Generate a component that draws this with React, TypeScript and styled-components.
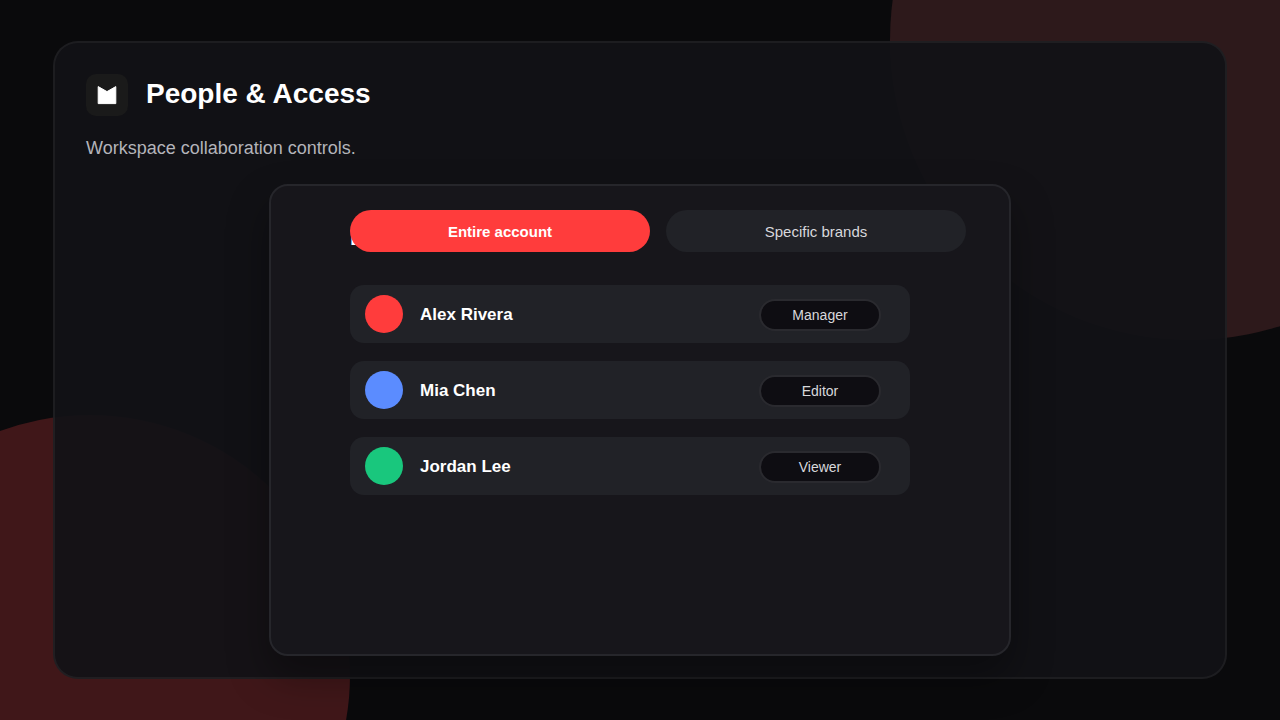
import React from "react";
import styled, { createGlobalStyle } from "styled-components";

const GlobalStyle = createGlobalStyle`
  *, *::before, *::after { box-sizing: border-box; }
  body {
    margin: 0;
    background: #0a0a0c;
    font-family: "Liberation Sans", Arial, Helvetica, sans-serif;
    color: #ffffff;
  }
  h1, h2, p, ul { margin: 0; padding: 0; }
  button { font-family: inherit; cursor: pointer; }
`;

const Page = styled.div`
  position: relative;
  display: flex;
  min-height: 100vh;
  padding: 41px 53px;
  overflow: hidden;
  background: #0a0a0c;
`;

const TopGlow = styled.div`
  position: absolute;
  top: -260px;
  right: -210px;
  width: 600px;
  height: 600px;
  border-radius: 50%;
  background: #2d191b;
`;

const BottomGlow = styled.div`
  position: absolute;
  bottom: -215px;
  left: -170px;
  width: 520px;
  height: 520px;
  border-radius: 50%;
  background: #401719;
`;

const Card = styled.main`
  position: relative;
  flex: 1;
  display: flex;
  flex-direction: column;
  padding: 31px 31px 21px;
  border: 2px solid rgba(255, 255, 255, 0.05);
  border-radius: 25px;
  background: rgba(18, 18, 22, 0.94);
`;

const Header = styled.header`
  display: flex;
  align-items: center;
  gap: 18px;
  height: 42px;
`;

const Logo = styled.div`
  display: grid;
  place-items: center;
  width: 42px;
  height: 42px;
  border-radius: 10px;
  background: #1a1a1a;
`;

const Title = styled.h1`
  padding-bottom: 2px;
  font-size: 28px;
  line-height: 32px;
  font-weight: 700;
`;

const Subtitle = styled.p`
  margin-top: 22px;
  font-size: 18px;
  line-height: 20px;
  color: #b4b4ba;
`;

const Panel = styled.section`
  flex: 1;
  width: 100%;
  max-width: 742px;
  margin: 26px auto 0;
  padding: 24px 43px 24px 79px;
  border: 2px solid #26262b;
  border-radius: 19px;
  background: #17161b;
  box-shadow: 0 20px 40px rgba(0, 0, 0, 0.35);
`;

const PanelHead = styled.div`
  display: grid;
  align-items: center;

  > * { grid-area: 1 / 1; }
`;

const PanelTitle = styled.h2`
  align-self: end;
  font-size: 22px;
  line-height: 28px;
  font-weight: 700;
`;

const Scopes = styled.div`
  position: relative;
  display: grid;
  grid-template-columns: 1fr 1fr;
  gap: 16px;
`;

const ScopeButton = styled.button<{ $active?: boolean }>`
  height: 42px;
  padding: 0;
  border: 0;
  border-radius: 21px;
  font-size: 15px;
  font-weight: ${(p) => (p.$active ? 700 : 400)};
  color: ${(p) => (p.$active ? "#ffffff" : "#d8d8dc")};
  background: ${(p) => (p.$active ? "#ff3c3c" : "#212227")};
`;

const People = styled.ul`
  display: flex;
  flex-direction: column;
  gap: 18px;
  max-width: 560px;
  margin-top: 33px;
  list-style: none;
`;

const PersonRow = styled.li`
  display: flex;
  align-items: center;
  height: 58px;
  padding: 0 29px 0 15px;
  border-radius: 14px;
  background: #212227;
`;

const Avatar = styled.span<{ $color: string }>`
  width: 38px;
  height: 38px;
  border-radius: 50%;
  background: ${(p) => p.$color};
`;

const Name = styled.span`
  flex: 1;
  margin-left: 17px;
  padding-top: 2px;
  font-size: 17px;
  line-height: 20px;
  font-weight: 700;
`;

const RoleButton = styled.button`
  width: 122px;
  height: 32px;
  margin-top: 2px;
  padding: 0;
  border: 2px solid #2a2a2f;
  border-radius: 16px;
  font-size: 14px;
  color: #d8d8dc;
  background: #0e0d12;
`;

const people = [
  { name: "Alex Rivera", role: "Manager", color: "#ff3c3c" },
  { name: "Mia Chen", role: "Editor", color: "#5b8cff" },
  { name: "Jordan Lee", role: "Viewer", color: "#19c77d" },
];

export default function App() {
  return (
    <>
      <GlobalStyle />
      <Page>
        <TopGlow />
        <BottomGlow />
        <Card>
          <Header>
            <Logo>
              <svg width="20" height="20" viewBox="0 0 20 20" aria-hidden="true">
                <path
                  d="M1.2 1.6 10 6.6 18.8 1.6V18.6H1.2Z"
                  fill="#fff"
                  stroke="#fff"
                  strokeWidth="1"
                  strokeLinejoin="round"
                />
              </svg>
            </Logo>
            <Title>People &amp; Access</Title>
          </Header>
          <Subtitle>Workspace collaboration controls.</Subtitle>
          <Panel>
            <PanelHead>
              <PanelTitle>Brand access</PanelTitle>
              <Scopes>
                <ScopeButton type="button" aria-pressed="true" $active>
                  Entire account
                </ScopeButton>
                <ScopeButton type="button" aria-pressed="false">
                  Specific brands
                </ScopeButton>
              </Scopes>
            </PanelHead>
            <People>
              {people.map((p) => (
                <PersonRow key={p.name}>
                  <Avatar $color={p.color} />
                  <Name>{p.name}</Name>
                  <RoleButton type="button">{p.role}</RoleButton>
                </PersonRow>
              ))}
            </People>
          </Panel>
        </Card>
      </Page>
    </>
  );
}
